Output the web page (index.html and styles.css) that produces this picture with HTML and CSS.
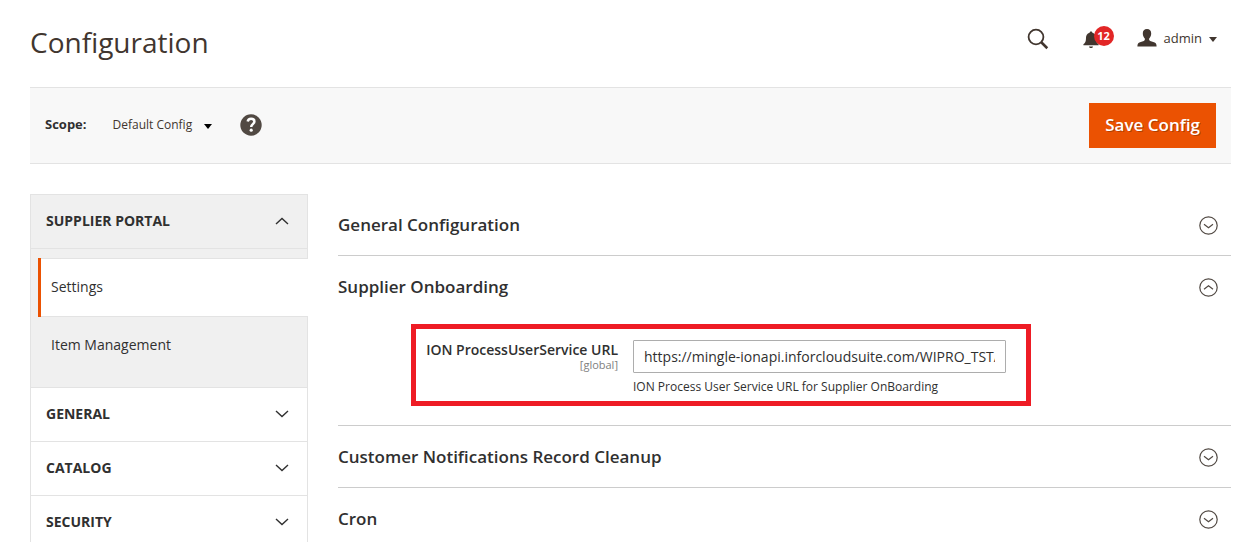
FILE: index.html
```html
<!DOCTYPE html>
<html lang="en">
<head>
<meta charset="utf-8">
<meta name="viewport" content="width=device-width, initial-scale=1">
<title>Configuration</title>
<link rel="stylesheet" href="styles.css">
</head>
<body>
<header class="page-header">
  <h1 class="page-title">Configuration</h1>
  <div class="header-tools">
    <button class="icon-button search" type="button" aria-label="Search">
      <svg width="22" height="22" viewBox="0 0 22 22" fill="none" stroke="#41362f"><circle cx="9" cy="9" r="7.4" stroke-width="1.800"/><path d="M14.3 14.3 20.3 20.2" stroke-width="2.6"/></svg>
    </button>
    <button class="icon-button notifications" type="button" aria-label="Notifications">
      <svg width="16" height="18" viewBox="0 0 16 18" fill="#41362f"><path d="M8 0.5c.8 0 1.3.5 1.4 1.2C12 2.400 13 4.500 13 7c0 3.500.8 5 2.600 6.300V14.300H.4v-1C2.200 12 3 10.500 3 7c0-2.500 1-4.600 3.600-5.300C6.700 1 7.200.5 8 .5z"/><path d="M6 15.400h4c-.2 1-1 1.700-2 1.700s-1.800-.7-2-1.700z"/></svg>
      <span class="badge">12</span>
    </button>
    <button class="icon-button account" type="button">
      <svg width="20" height="18" viewBox="0 0 20 18" fill="#41362f"><path d="M10 0c2.700 0 4.200 1.700 4.200 4.300 0 2.300-.8 4.200-2 5.300-.3 1.200.1 1.900 1 2.300l3.800 1.300c1.700.6 2.600 1.500 2.600 4.300H.4c0-2.800.9-3.700 2.600-4.300l3.800-1.300c.9-.4 1.300-1.100 1-2.300-1.200-1.100-2-3-2-5.300C5.800 1.700 7.300 0 10 0z"/></svg>
      <span>admin</span>
      <svg class="caret" width="8" height="5" viewBox="0 0 8 5" fill="#41362f"><path d="M0 0h8L4 5z"/></svg>
    </button>
  </div>
</header>

<div class="actions-bar">
  <span class="scope-label" id="scope-label">Scope:</span>
  <button class="scope-switch" type="button" aria-describedby="scope-label">
    <span>Default Config</span>
    <svg class="caret" width="8" height="5" viewBox="0 0 8 5" fill="#000"><path d="M0 0h8L4 5z"/></svg>
  </button>
  <button class="icon-button help" type="button" aria-label="Help"><svg width="22" height="22" viewBox="0 0 22 22"><circle cx="11" cy="11" r="10.700" fill="#514943"/><path d="M7.700 7.500C8 5.500 9.400 4.700 11.100 4.700c2 0 3.300 1.100 3.300 2.800 0 2.600-3.200 2.700-3.200 5.500" fill="none" stroke="#fff" stroke-width="2.500"/><circle cx="11.200" cy="16.200" r="1.600" fill="#fff"/></svg></button>
  <button class="save-button" type="button">Save Config</button>
</div>

<div class="page-columns">
  <nav class="config-nav" aria-label="Configuration sections">
    <section class="nav-group open">
      <button class="nav-title" type="button" aria-expanded="true">SUPPLIER PORTAL
        <svg width="14" height="8" viewBox="0 0 14 8"><path d="M1 7l6-5.500L13 7"/></svg></button>
      <ul class="nav-items">
        <li><a class="nav-link current" href="#settings">Settings</a></li>
        <li><a class="nav-link" href="#items">Item Management</a></li>
      </ul>
    </section>
    <section class="nav-group">
      <button class="nav-title" type="button" aria-expanded="false">GENERAL
        <svg width="14" height="8" viewBox="0 0 14 8"><path d="M1 1l6 5.500L13 1"/></svg></button>
    </section>
    <section class="nav-group">
      <button class="nav-title" type="button" aria-expanded="false">CATALOG
        <svg width="14" height="8" viewBox="0 0 14 8"><path d="M1 1l6 5.500L13 1"/></svg></button>
    </section>
    <section class="nav-group">
      <button class="nav-title" type="button" aria-expanded="false">SECURITY
        <svg width="14" height="8" viewBox="0 0 14 8"><path d="M1 1l6 5.500L13 1"/></svg></button>
    </section>
  </nav>

  <main class="config-main" id="settings">
    <section class="config-section">
      <button class="section-title" type="button" aria-expanded="false">General Configuration
        <svg width="19" height="19" viewBox="0 0 19 19"><circle cx="9.500" cy="9.500" r="8.700"/><path d="M5 8.300l4.500 3.400L14 8.300"/></svg></button>
    </section>
    <section class="config-section">
      <button class="section-title" type="button" aria-expanded="true">Supplier Onboarding
        <svg width="19" height="19" viewBox="0 0 19 19"><circle cx="9.500" cy="9.500" r="8.700"/><path d="M5 11.200l4.500-3.400L14 11.200"/></svg></button>
      <div class="field">
        <label class="field-label" for="service-url">ION ProcessUserService URL <span class="field-scope">[global]</span></label>
        <div class="field-control">
          <input class="text-input" id="service-url" type="text" value="https://mingle-ionapi.inforcloudsuite.com/WIPRO_TST/" aria-describedby="service-note">
          <p class="field-note" id="service-note">ION Process User Service URL for Supplier OnBoarding</p>
        </div>
      </div>
    </section>
    <section class="config-section">
      <button class="section-title" type="button" aria-expanded="false">Customer Notifications Record Cleanup
        <svg width="19" height="19" viewBox="0 0 19 19"><circle cx="9.500" cy="9.500" r="8.700"/><path d="M5 8.300l4.500 3.400L14 8.300"/></svg></button>
    </section>
    <section class="config-section">
      <button class="section-title" type="button" aria-expanded="false">Cron
        <svg width="19" height="19" viewBox="0 0 19 19"><circle cx="9.500" cy="9.500" r="8.700"/><path d="M5 8.300l4.500 3.400L14 8.300"/></svg></button>
    </section>
  </main>
</div>
</body>
</html>
```

FILE: styles.css
```css
* { box-sizing: border-box; }

html { height: 100%; overflow: hidden; }

body {
  height: 100%;
  margin: 0;
  padding: 0 25px 0 30px;
  overflow: hidden;
  background: #fff;
  color: #303030;
  font-family: "Open Sans", "Noto Sans", sans-serif;
  font-size: 14px;
  line-height: 20px;
}

button {
  padding: 0;
  border: 0;
  background: none;
  color: inherit;
  font: inherit;
  cursor: pointer;
}

svg { display: block; flex: none; }

.page-header {
  display: flex;
  justify-content: space-between;
  align-items: flex-start;
  padding: 22px 14px 25px 0;
}

.page-title {
  margin: 0;
  color: #41362f;
  font-size: 28px;
  font-weight: 400;
  line-height: 40px;
}

.header-tools {
  display: flex;
  align-items: center;
  height: 32px;
}

.icon-button { display: flex; align-items: center; }

.search { padding-top: 2px; }

.notifications { position: relative; margin: 4px 38px 0 34px; }

.badge {
  position: absolute;
  top: -5px;
  left: 11px;
  width: 20px;
  height: 20px;
  border-radius: 50%;
  background: #e22626;
  color: #fff;
  font-size: 11px;
  font-weight: 700;
  line-height: 20px;
  text-align: center;
}

.account {
  gap: 7px;
  color: #41362f;
  font-size: 13px;
  line-height: 18px;
}

.actions-bar {
  display: flex;
  align-items: center;
  padding: 15px;
  border: solid #e3e3e3;
  border-width: 1px 0;
  background: #f8f8f8;
  font-size: 13px;
}

.scope-label { padding-bottom: 3px; font-weight: 700; }

.scope-switch {
  display: flex;
  align-items: center;
  gap: 12px;
  margin: 0 28px 0 26px;
  padding-bottom: 2px;
  color: #41362f;
  font-size: 12px;
}

.help { padding-bottom: 2px; }

.caret { margin-top: 3px; }

.save-button {
  margin-left: auto;
  padding: 0 16px 1px;
  background: #eb5202;
  color: #fff;
  font-size: 17px;
  font-weight: 600;
  line-height: 44px;
  text-shadow: 1px 1px 0 rgba(0, 0, 0, 0.25);
}

.page-columns {
  display: grid;
  grid-template-columns: 278px minmax(0, 1fr);
  gap: 30px;
  align-items: start;
  margin-top: 30px;
}

.config-nav {
  border: solid #e3e3e3;
  border-width: 1px 0 0 1px;
}

.nav-group {
  border: solid #e3e3e3;
  border-width: 0 1px 1px 0;
}

.nav-title {
  display: flex;
  justify-content: space-between;
  align-items: center;
  width: 100%;
  height: 53px;
  padding: 0 18px 2px 15px;
  font-size: 14px;
  font-weight: 700;
}

.nav-title svg {
  fill: none;
  stroke: #303030;
  stroke-width: 1.4;
}

.open { border-right: 0; background: #f0f0f0; }

.open .nav-title {
  border: solid #e3e3e3;
  border-width: 0 1px 1px 0;
  height: 54px;
}

.nav-items {
  margin: 0;
  padding: 0;
  list-style: none;
}

.nav-items li { padding-left: 7px; }

.nav-items li:first-child { padding-top: 9px; background: linear-gradient(#e3e3e3, #e3e3e3) right top / 1px 9px no-repeat; }

.nav-items li:last-child { padding-bottom: 13px; border-right: 1px solid #e3e3e3; }

.nav-link {
  display: block;
  padding: 18px 10px 19px 13px;
  color: #303030;
  text-decoration: none;
}

.current {
  border: solid #e3e3e3;
  border-width: 1px 0;
  background: #fff;
  box-shadow: -3px 0 #eb5202;
  margin-left: 3px;
  padding-left: 10px;
}

.config-section { border-bottom: 1px solid #ccc; }

.section-title {
  display: flex;
  justify-content: space-between;
  align-items: center;
  width: 100%;
  height: 61px;
  padding: 0 13px 0 0;
  font-size: 17px;
  font-weight: 600;
}

.section-title svg {
  margin-top: 2px;
  fill: none;
  stroke: #514943;
  stroke-width: 1.2;
}

.field {
  display: grid;
  grid-template-columns: 202px minmax(0, 1fr);
  gap: 15px;
  max-width: 620px;
  margin: 7px 0 19px 73px;
  padding: 11px 20px 5px 0;
  border: 5px solid #ee1c25;
}

.field-label {
  padding-top: 1px;
  font-weight: 600;
  line-height: 18px;
  text-align: right;
  white-space: nowrap;
}

.field-scope {
  display: block;
  color: #808080;
  font-size: 11px;
  font-weight: 400;
  line-height: 12px;
}

.text-input {
  display: block;
  width: 100%;
  height: 33px;
  padding: 0 10px;
  border: 1px solid #adadad;
  border-radius: 1px;
  background: #fff;
  color: #303030;
  font: inherit;
}

.field-note {
  margin: 5px 0 0;
  font-size: 12px;
  line-height: 18px;
}
```
